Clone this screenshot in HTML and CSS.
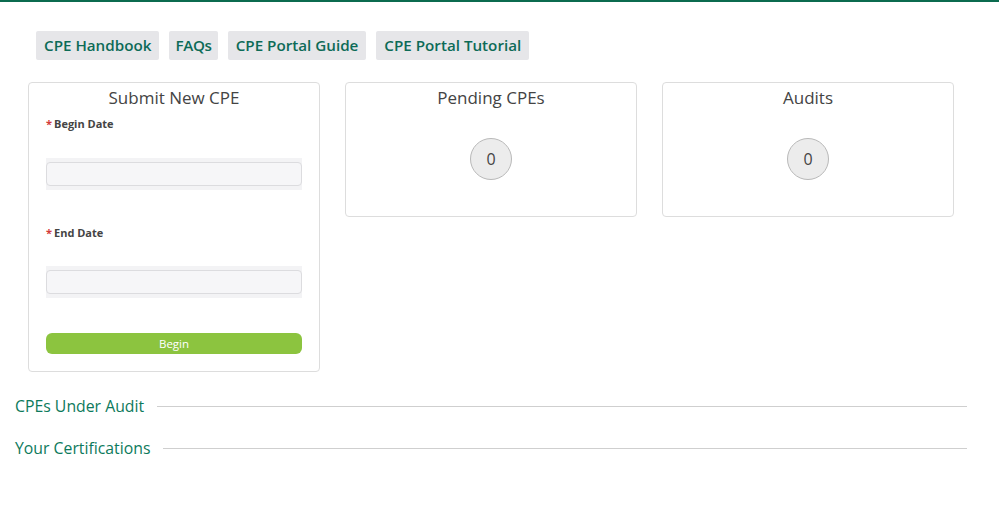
FILE: index.html
```html
<!DOCTYPE html>
<html>
<head>
<meta charset="utf-8">
<link rel="stylesheet" href="styles.css">
</head>
<body>
<div class="topbar"></div>
<nav class="links">
  <a class="link-btn">CPE Handbook</a>
  <a class="link-btn link-btn-short">FAQs</a>
  <a class="link-btn">CPE Portal Guide</a>
  <a class="link-btn">CPE Portal Tutorial</a>
</nav>
<div class="cards">
  <div class="card card-form">
    <h2 class="card-title">Submit New CPE</h2>
    <div class="field">
      <label class="field-label"><span class="req">*</span>Begin Date</label>
      <div class="input-band"><div class="input"></div></div>
    </div>
    <div class="field">
      <label class="field-label"><span class="req">*</span>End Date</label>
      <div class="input-band"><div class="input"></div></div>
    </div>
    <button class="begin-btn">Begin</button>
  </div>
  <div class="card card-count">
    <h2 class="card-title">Pending CPEs</h2>
    <div class="count">0</div>
  </div>
  <div class="card card-count">
    <h2 class="card-title">Audits</h2>
    <div class="count">0</div>
  </div>
</div>
<div class="sections">
  <div class="section-head"><span>CPEs Under Audit</span><div class="rule"></div></div>
  <div class="section-head"><span>Your Certifications</span><div class="rule"></div></div>
</div>
</body>
</html>
```
FILE: styles.css
```css
* { box-sizing: border-box; }
body {
  margin: 0;
  font-family: "Open Sans", "Liberation Sans", sans-serif;
  background: #fff;
  color: #444;
}
.topbar {
  height: 2px;
  background: #0b6b4f;
}
.links {
  display: flex;
  gap: 10px;
  padding: 29px 0 0 36px;
}
.link-btn {
  display: block;
  background: #e6e6e9;
  color: #0d6b57;
  font-weight: 600;
  font-size: 15.2px;
  line-height: 29px;
  height: 29px;
  padding: 0 8px;
  border-radius: 2px;
}
.link-btn-short {
  padding: 0 6px;
  letter-spacing: -0.3px;
}
.cards {
  display: flex;
  align-items: flex-start;
  gap: 25px;
  padding: 22px 0 0 28px;
}
.card {
  width: 292px;
  border: 1px solid #ddd;
  border-radius: 4px;
  background: #fff;
}
.card-title {
  margin: 0;
  font-size: 17px;
  font-weight: 400;
  line-height: 22px;
  text-align: center;
  color: #444;
}
.card-form {
  height: 290px;
  padding: 4px 17px 0 17px;
}
.field-label {
  display: block;
  margin-top: 7px;
  font-size: 11px;
  font-weight: 700;
  line-height: 15px;
  color: #444;
}
.req {
  color: #d23a3a;
  margin-right: 2px;
}
.field + .field .field-label {
  margin-top: 35px;
}
.input-band {
  margin-top: 27px;
  background: #f3f3f5;
  padding: 4px 0;
}
.field + .field .input-band {
  margin-top: 26px;
}
.input {
  height: 24px;
  background: #f6f6f8;
  border: 1px solid #dcdcdf;
  border-radius: 4px;
}
.begin-btn {
  display: block;
  width: 100%;
  margin-top: 35px;
  height: 21px;
  border: none;
  border-radius: 6px;
  background: #8cc43f;
  color: #fff;
  font-family: "Open Sans", "Liberation Sans", sans-serif;
  font-size: 11.5px;
  line-height: 21px;
  padding: 0;
}
.card-count {
  height: 135px;
  padding-top: 4px;
}
.count {
  width: 42px;
  height: 42px;
  margin: 29px auto 0;
  border-radius: 50%;
  background: #ececec;
  border: 1px solid #b9b9b9;
  display: flex;
  align-items: center;
  justify-content: center;
  font-size: 16px;
  color: #444;
}
.sections {
  padding: 23px 32px 0 15px;
  display: flex;
  flex-direction: column;
  gap: 20px;
}
.section-head {
  display: flex;
  align-items: center;
  gap: 13px;
  height: 22px;
  font-size: 15.8px;
  color: #0d7a5c;
}
.rule {
  flex: 1;
  height: 1px;
  background: #cfcfcf;
}
```
